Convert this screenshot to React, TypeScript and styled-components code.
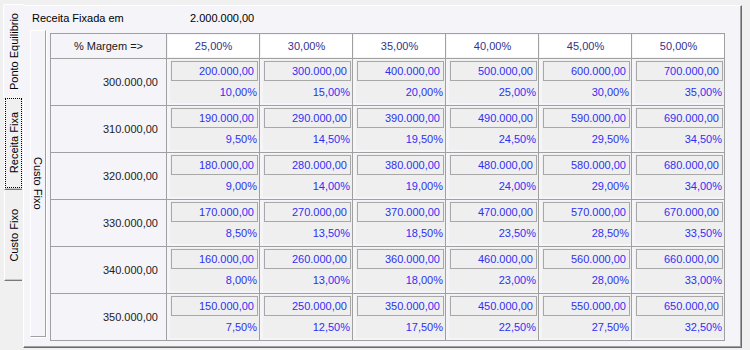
import styled, { createGlobalStyle } from 'styled-components';

const GlobalStyle = createGlobalStyle`
  body {
    margin: 0;
    background: #f0f0f0;
    font-family: "Liberation Sans", Arial, sans-serif;
    font-size: 11px;
    color: #1a1a1a;
  }
`;

const RECEITA = 2000000;
const margens = [25, 30, 35, 40, 45, 50];
const custos = [300000, 310000, 320000, 330000, 340000, 350000];

function fmt(n: number) {
    const [int, dec] = n.toFixed(2).split('.');
    return int.replace(/\B(?=(\d{3})+(?!\d))/g, '.') + ',' + dec;
}

export default function App() {
    return (
        <Window>
            <GlobalStyle/>
            <TabStrip>
                <Tab selected height={94}><TabText>Ponto Equilibrio</TabText></Tab>
                <Tab height={92}><FocusRect><TabText>Receita Fixa</TabText></FocusRect></Tab>
                <Tab height={91}><TabText>Custo Fixo</TabText></Tab>
            </TabStrip>

            <Sheet>
                <TopLine>
                    <TopLabel>Receita Fixada em</TopLabel>
                    <span>{fmt(RECEITA)}</span>
                </TopLine>

                <Body>
                    <GroupBox><Legend>Custo Fixo</Legend></GroupBox>

                    <Grid>
                        <HeadLabel>% Margem =&gt;</HeadLabel>
                        {margens.map(m => (
                            <HeadCell key={m}><HeadValue>{fmt(m)}%</HeadValue></HeadCell>
                        ))}

                        {custos.map(c => (
                            <Row key={c}>
                                <RowLabel>{fmt(c)}</RowLabel>
                                {margens.map(m => {
                                    const valor = RECEITA * m / 100 - c;
                                    return (
                                        <DataCell key={m}>
                                            <CellPanel>
                                                <ValueBox>{fmt(valor)}</ValueBox>
                                                <Percent>{fmt(valor / RECEITA * 100)}%</Percent>
                                            </CellPanel>
                                        </DataCell>
                                    );
                                })}
                            </Row>
                        ))}
                    </Grid>
                </Body>
            </Sheet>
        </Window>
    );
}

const Window = styled.div`
  display: flex;
  width: 750px;
  height: 350px;
  background: #f0f0f0;
`;

const TabStrip = styled.div`
  width: 23px;
  display: flex;
  flex-direction: column;
  padding-top: 4px;
  box-sizing: border-box;
`;

const Tab = styled.div<{ selected?: boolean, height: number }>`
  height: ${p => p.height}px;
  box-sizing: border-box;
  margin-left: ${p => (p.selected ? 3 : 4)}px;
  margin-right: ${p => (p.selected ? -1 : 1)}px;
  background: ${p => (p.selected ? '#f4f4f9' : '#f0f0f0')};
  border-left: 1px solid #fff;
  border-top: ${p => (p.selected ? '1px solid #fff' : 'none')};
  border-bottom: ${p => (p.selected ? 'none' : '1px solid #7a7a7a')};
  box-shadow: ${p => (p.selected ? 'none' : 'inset 0 -1px 0 #c8c8c8')};
  border-top-left-radius: 2px;
  position: relative;
  z-index: ${p => (p.selected ? 1 : 0)};
  display: flex;
  align-items: center;
  justify-content: center;
`;

const FocusRect = styled.div`
  position: absolute;
  inset: 0 0 1px 0;
  border: 1px dotted #000;
  display: flex;
  align-items: center;
  justify-content: center;
`;

const TabText = styled.span`
  writing-mode: vertical-rl;
  transform: rotate(180deg);
  white-space: nowrap;
  color: #000;
`;

const Sheet = styled.div`
  flex: 1;
  margin: 5px 8px 2px 0;
  box-sizing: border-box;
  background: #f4f4f9;
  border-left: 1px solid #fff;
  border-top: 1px solid #fff;
  border-right: 1px solid #6a6a6a;
  border-bottom: 1px solid #6a6a6a;
  box-shadow: inset -1px -1px 0 #a0a0a0;
  display: flex;
  flex-direction: column;
`;

const TopLine = styled.div`
  display: flex;
  align-items: center;
  height: 14px;
  padding: 5px 0 0 8px;
  color: #000;
`;

const TopLabel = styled.span`
  width: 158px;
`;

const Body = styled.div`
  display: flex;
  align-items: flex-start;
  margin-top: 5px;
  padding-left: 6px;
`;

const GroupBox = styled.div`
  width: 16px;
  height: 307px;
  box-sizing: border-box;
  border-left: 1px solid #fff;
  border-top: 1px solid #fff;
  border-right: 1px solid #a0a0a0;
  border-bottom: 1px solid #a0a0a0;
  box-shadow: 1px 1px 0 #fff;
  display: flex;
  align-items: center;
  justify-content: center;
`;

const Legend = styled.span`
  writing-mode: vertical-rl;
  white-space: nowrap;
  color: #000;
`;

const Grid = styled.div`
  margin: 3px 0 0 4px;
  display: grid;
  grid-template-columns: 116px repeat(6, 93px);
  grid-template-rows: 25px repeat(6, 47px);
  border-left: 1px solid #a0a0a0;
  border-top: 1px solid #a0a0a0;
`;

const Row = styled.div`
  display: contents;
`;

const Cell = styled.div`
  box-sizing: border-box;
  border-right: 1px solid #a0a0a0;
  border-bottom: 1px solid #a0a0a0;
`;

const HeadLabel = styled(Cell)`
  display: flex;
  align-items: center;
  justify-content: center;
  color: #1a1a1a;
`;

const HeadCell = styled(Cell)`
  display: flex;
  padding: 1px 0 1px 1px;
`;

const HeadValue = styled.div`
  flex: 1;
  background: #fff;
  display: flex;
  align-items: center;
  justify-content: center;
  color: #33338c;
`;

const RowLabel = styled(Cell)`
  display: flex;
  align-items: center;
  justify-content: flex-end;
  padding-right: 8px;
  color: #222;
`;

const DataCell = styled(Cell)`
  display: flex;
  padding: 1px 0 2px 3px;
`;

const CellPanel = styled.div`
  flex: 1;
  display: flex;
  flex-direction: column;
  padding: 1px 1px 0 1px;
  background: #efefef;
  color: #2f2ff2;
`;

const ValueBox = styled.div`
  height: 20px;
  box-sizing: border-box;
  border: 1px solid #a8a8a8;
  display: flex;
  align-items: center;
  justify-content: flex-end;
  padding-right: 3px;
`;

const Percent = styled.div`
  flex: 1;
  display: flex;
  align-items: center;
  justify-content: flex-end;
  padding-right: 1px;
`;
